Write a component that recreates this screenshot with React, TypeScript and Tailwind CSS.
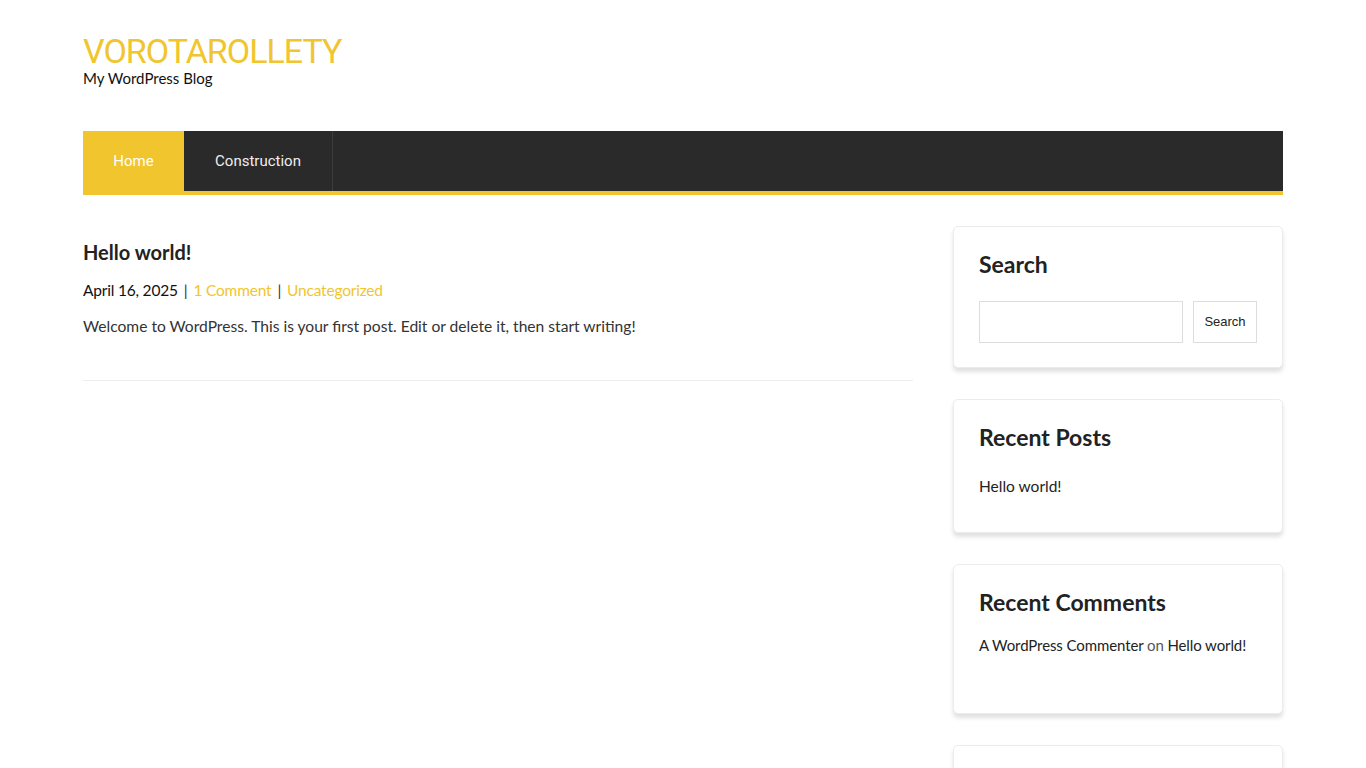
import React from 'react';

const body = { fontFamily: 'Lato, "Noto Sans", sans-serif' };

function Widget({ title, children, className = '' }: { title: string; children: React.ReactNode; className?: string }) {
  return (
    <section className={`rounded-[5px] border border-[#ececec] bg-white px-[25px] pt-[22px] shadow-[0_4px_4px_rgba(0,0,0,0.12)] ${className}`}>
      <h2 className="text-[23px] font-bold leading-[30px] text-[#222]">{title}</h2>
      {children}
    </section>
  );
}

export default function App() {
  return (
    <div className="min-h-screen bg-white text-[#222]" style={body}>
      <div className="mx-auto w-[1200px]">
        <header className="pt-[31px] pb-[46px]">
          <h1
            className="text-[34px] leading-[40px] tracking-[-1px] text-[#f0c52e]"
            style={{ fontFamily: 'Roboto, sans-serif' }}
          >
            VOROTAROLLETY
          </h1>
          <p className="text-[15px] leading-[14px] text-[#111]">My WordPress Blog</p>
        </header>

        <nav className="flex h-[64px] border-b-4 border-[#f0c52e] bg-[#2a2a2a]" style={{ fontFamily: 'Roboto, sans-serif' }}>
          <a className="flex w-[101px] items-center justify-center bg-[#f0c52e] text-[15px] text-white">Home</a>
          <a className="flex w-[149px] items-center justify-center border-r border-[#3d3d3d] text-[15px] text-[#eee]">
            Construction
          </a>
        </nav>

        <div className="mt-[31px] flex gap-[40px]">
          <main className="w-[830px]">
            <article className="border-b border-[#eee] pt-[13px] pb-[42px]">
              <h2 className="text-[20px] font-bold leading-[26px] text-[#222]">Hello world!</h2>
              <div className="mt-[13px] flex items-center text-[15.5px] leading-[24px] tracking-[-0.2px]">
                <span className="text-[#111]">April 16, 2025</span>
                <span className="mx-[6px] text-[#333]">|</span>
                <a className="text-[#f0c52e]">1 Comment</a>
                <span className="mx-[6px] text-[#333]">|</span>
                <a className="text-[#f0c52e]">Uncategorized</a>
              </div>
              <p className="mt-[12px] text-[15.6px] leading-[24px] text-[#333]">
                Welcome to WordPress. This is your first post. Edit or delete it, then start writing!
              </p>
            </article>
          </main>

          <aside className="flex w-[330px] flex-col gap-[31px]">
            <Widget title="Search" className="h-[142px]">
              <form className="mt-[22px] flex gap-[10px]">
                <input className="h-[42px] w-[204px] border border-[#ddd] bg-white outline-none" />
                <button
                  type="button"
                  className="h-[42px] w-[64px] border border-[#ddd] bg-white text-[13px] text-[#222]"
                  style={{ fontFamily: '"Liberation Sans", Arial, sans-serif' }}
                >
                  Search
                </button>
              </form>
            </Widget>

            <Widget title="Recent Posts" className="h-[134px]">
              <ul className="mt-[23px] text-[15.5px] leading-[22px] text-[#222]">
                <li>Hello world!</li>
              </ul>
            </Widget>

            <Widget title="Recent Comments" className="h-[150px]">
              <ul className="mt-[17px] whitespace-nowrap text-[15px] leading-[22px] tracking-[-0.1px] text-[#222]">
                <li>
                  A WordPress Commenter <span className="text-[#555]">on</span> Hello world!
                </li>
              </ul>
            </Widget>

            <Widget title="Archives" className="h-[150px]">
              <ul className="mt-[17px] text-[15.5px] leading-[22px] text-[#222]">
                <li>April 2025</li>
              </ul>
            </Widget>
          </aside>
        </div>
      </div>
    </div>
  );
}
